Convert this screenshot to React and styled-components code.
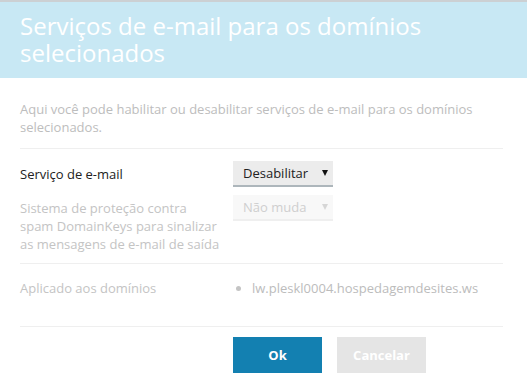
import React from "react";
import styled, { createGlobalStyle } from "styled-components";

const GlobalStyle = createGlobalStyle`
  body {
    margin: 0;
    background: #fff;
    font-family: "Open Sans", "Liberation Sans", sans-serif;
    font-size: 13px;
    line-height: 18px;
    color: #222;
  }
`;

const Dialog = styled.div`
  width: 527px;
  height: 389px;
  overflow: hidden;
  background: #fff;
`;

const Header = styled.div`
  border-top: 2px solid #ccd0d3;
  background: #c8e8f4;
  padding: 10px 24px 12px 20px;
`;

const Title = styled.h1`
  margin: 0;
  font-size: 24px;
  line-height: 27px;
  font-weight: 400;
  color: #fff;
`;

const Body = styled.div`
  padding: 22px 24px 0 20px;
`;

const Section = styled.div`
  padding: ${(p) => p.$pad || "0"};
  border-bottom: ${(p) => (p.$noLine ? "none" : "1px solid #efefef")};
`;

const Description = styled.p`
  margin: 0;
  color: #bdbdbd;
`;

const FieldRow = styled.div`
  display: grid;
  grid-template-columns: 213px 1fr;
  align-items: start;
  & + & {
    margin-top: 8px;
  }
`;

const Label = styled.div`
  color: ${(p) => (p.$muted ? "#c4c4c4" : "#222")};
  padding-top: ${(p) => p.$top || "4px"};
  padding-right: 10px;
`;

const SelectBox = styled.div`
  width: 100px;
  height: 26px;
  box-sizing: border-box;
  display: flex;
  align-items: center;
  justify-content: space-between;
  padding: 0 5px 0 10px;
  background: ${(p) => (p.$disabled ? "#f8f8f8" : "#ececec")};
  border-bottom: 2px solid ${(p) => (p.$disabled ? "#efefef" : "#adb6bb")};
  color: ${(p) => (p.$disabled ? "#cfcfcf" : "#222")};
`;

const Arrow = styled.span`
  width: 0;
  height: 0;
  border-left: 3px solid transparent;
  border-right: 3px solid transparent;
  border-top: 6px solid ${(p) => (p.$disabled ? "#d6d6d6" : "#111")};
`;

const DomainList = styled.ul`
  margin: 0;
  padding: 0;
  list-style: none;
`;

const DomainItem = styled.li`
  display: flex;
  align-items: center;
  gap: 11px;
  color: #bcbcbc;
`;

const Dot = styled.span`
  width: 5px;
  height: 5px;
  margin-left: 3px;
  border-radius: 50%;
  background: #c4c4c4;
`;

const Actions = styled.div`
  display: flex;
  gap: 15px;
  padding: 10px 0 0 213px;
`;

const Button = styled.button`
  width: 89px;
  height: 36px;
  border: none;
  font-family: inherit;
  font-size: 13px;
  font-weight: 700;
  color: #fff;
  background: ${(p) => (p.$primary ? "#1380b1" : "#e5e5e5")};
  cursor: pointer;
`;

export default function App() {
  return (
    <Dialog>
      <GlobalStyle />
      <Header>
        <Title>Serviços de e-mail para os domínios selecionados</Title>
      </Header>
      <Body>
        <Section $pad="0 0 12px">
          <Description>
            Aqui você pode habilitar ou desabilitar serviços de e-mail para os domínios selecionados.
          </Description>
        </Section>
        <Section $pad="12px 0 10px">
          <FieldRow>
            <Label>Serviço de e-mail</Label>
            <SelectBox>
              Desabilitar
              <Arrow />
            </SelectBox>
          </FieldRow>
          <FieldRow>
            <Label $muted>
              Sistema de proteção contra spam DomainKeys para sinalizar as mensagens de e-mail de saída
            </Label>
            <SelectBox $disabled>
              Não muda
              <Arrow $disabled />
            </SelectBox>
          </FieldRow>
        </Section>
        <Section $pad="15px 0 29px">
          <FieldRow>
            <Label $muted $top="0">Aplicado aos domínios</Label>
            <DomainList>
              <DomainItem>
                <Dot />
                lw.pleskl0004.hospedagemdesites.ws
              </DomainItem>
            </DomainList>
          </FieldRow>
        </Section>
        <Actions>
          <Button $primary>Ok</Button>
          <Button>Cancelar</Button>
        </Actions>
      </Body>
    </Dialog>
  );
}
